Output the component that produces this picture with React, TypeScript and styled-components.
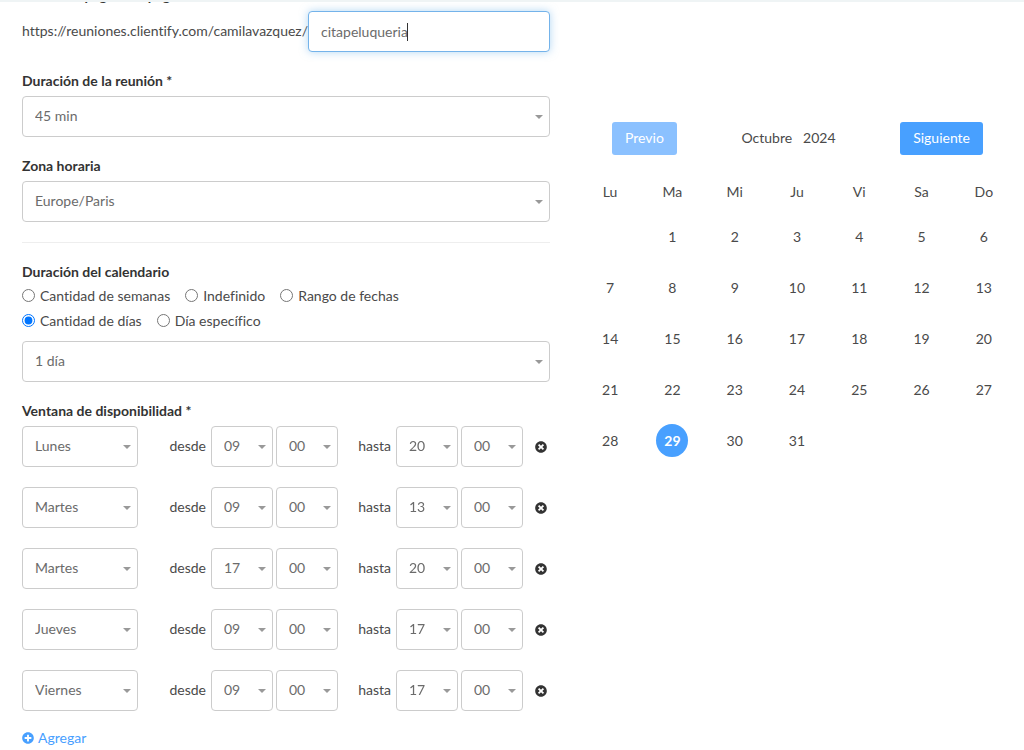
import React, { useState } from 'react';
import styled, { createGlobalStyle, css } from 'styled-components';
import { FaTimesCircle, FaPlusCircle } from 'react-icons/fa';

const GlobalStyle = createGlobalStyle`
  *, *::before, *::after { box-sizing: border-box; }
  body {
    margin: 0;
    background: #fff;
    color: #4a4a4a;
    font: 14px/20px Lato, "Open Sans", sans-serif;
    font-variant-ligatures: none;
  }
  button, input, select { font: inherit; font-variant-ligatures: none; }
`;

const Page = styled.div`
  border-top: 2px solid #eff4f5;
  overflow: hidden;
`;

const Columns = styled.main`
  display: grid;
  grid-template-columns: minmax(0, 528fr) minmax(0, 436fr);
  gap: 29px;
  padding: 0 9px 0 22px;
`;

const Form = styled.form`
  display: flex;
  flex-direction: column;
`;

const Clipped = styled.div`
  display: flex;
  align-items: flex-end;
  height: 4px;
  overflow: hidden;
  margin-bottom: 5px;
`;

const Label = styled.label`
  display: block;
  padding: 0;
  font-weight: 700;
  color: #333;
  line-height: 20px;
`;

const Field = styled.div`
  display: flex;
  flex-direction: column;
  gap: 5px;
  margin-bottom: 19px;
`;

const Group = styled.fieldset`
  border: 0;
  margin: 0;
  padding: 0;
  min-width: 0;
`;

const UrlRow = styled.div`
  display: grid;
  grid-template-columns: 286fr 242fr;
  align-items: center;
  margin-bottom: 19px;
`;

const UrlPrefix = styled.span`
  padding-bottom: 2px;
  white-space: nowrap;
`;

const UrlBox = styled.div`
  display: flex;
  align-items: center;
  position: relative;
`;

const Caret = styled.span`
  position: absolute;
  left: 99px;
  width: 1px;
  height: 18px;
  background: #333;
`;

const control = css`
  width: 100%;
  height: 41px;
  padding: 0 12px 2px;
  border: 1px solid #ccc;
  border-radius: 4px;
  background: #fff;
  color: #6b6b6b;
`;

const UrlInput = styled.input`
  ${control}
  padding-bottom: 0;
  caret-color: transparent;
  &:focus {
    outline: 0;
    border-color: #74b3ea;
    box-shadow: 0 0 8px rgba(102, 175, 233, 0.5);
  }
`;

const SelectBox = styled.div<{ $width?: number }>`
  display: flex;
  align-items: center;
  position: relative;
  width: ${(p) => (p.$width ? `${p.$width}px` : '100%')};
  &::after {
    content: '';
    position: absolute;
    right: 7px;
    border: 4px solid transparent;
    border-top-color: #999;
    border-bottom: 0;
    pointer-events: none;
  }
`;

const NativeSelect = styled.select`
  ${control}
  appearance: none;
`;

const Divider = styled.hr`
  width: 100%;
  margin: 1px 0 19px;
  border: 0;
  border-top: 1px solid #eee;
`;

const Radios = styled.div`
  display: flex;
  flex-wrap: wrap;
  column-gap: 15px;
  padding: 1px 0 8px;
`;

const RadioLabel = styled.label`
  display: flex;
  align-items: center;
  gap: 5px;
  line-height: 25px;
`;

const Radio = styled.input`
  width: 13px;
  height: 13px;
  margin: 0;
`;

const RowBreak = styled.span`
  flex-basis: 100%;
`;

const Slots = styled.div`
  display: flex;
  flex-direction: column;
  gap: 20px;
  padding: 5px 0 17px;
`;

const Slot = styled.div`
  display: grid;
  grid-template-columns: 116px 73fr auto 58fr auto 27px;
  align-items: center;
`;

const Word = styled.span`
  text-align: right;
  padding: 0 5px 2px 0;
`;

const Pair = styled.div`
  display: flex;
  gap: 3px;
`;

const IconButton = styled.button`
  display: flex;
  justify-content: flex-end;
  padding: 0 3px 0 0;
  border: 0;
  background: none;
  color: #333;
  cursor: pointer;
`;

const AddLink = styled.a`
  display: flex;
  align-items: center;
  gap: 4px;
  color: #48a0ff;
  text-decoration: none;
`;

const Calendar = styled.section`
  padding-top: 120px;
`;

const CalendarBar = styled.div`
  display: flex;
  align-items: center;
  justify-content: space-between;
  padding: 0 32px 0 33px;
  margin-bottom: 19px;
`;

const NavButton = styled.button`
  height: 33px;
  padding: 0 13px 2px;
  border: 0;
  border-radius: 3px;
  background: #48a0ff;
  color: #fff;
  &:disabled { background: #8bc1ff; }
`;

const Month = styled.div`
  display: flex;
  gap: 11px;
  padding-bottom: 2px;
`;

const Days = styled.table`
  width: 100%;
  table-layout: fixed;
  border-collapse: collapse;
  text-align: center;
  th { height: 37px; padding: 0 0 2px; font-weight: 400; }
  td { height: 51px; padding: 0; }
`;

const Day = styled.button<{ $active: boolean }>`
  width: 32px;
  height: 33px;
  padding: 0;
  border: 0;
  border-radius: 50%;
  background: ${(p) => (p.$active ? '#48a0ff' : 'transparent')};
  color: ${(p) => (p.$active ? '#fff' : 'inherit')};
  font-weight: ${(p) => (p.$active ? 700 : 400)};
`;

type SelectProps = { id?: string; label?: string; value: string; width?: number };

function Select({ id, label, value, width }: SelectProps) {
  return (
    <SelectBox $width={width}>
      <NativeSelect id={id} aria-label={label} defaultValue={value}>
        <option>{value}</option>
      </NativeSelect>
    </SelectBox>
  );
}

const slots = [
  ['Lunes', '09', '20'],
  ['Martes', '09', '13'],
  ['Martes', '17', '20'],
  ['Jueves', '09', '17'],
  ['Viernes', '09', '17'],
];

const modes = ['Cantidad de semanas', 'Indefinido', 'Rango de fechas', 'Cantidad de días', 'Día específico'];
const weekdays = ['Lu', 'Ma', 'Mi', 'Ju', 'Vi', 'Sa', 'Do'];
const weeks = [0, 1, 2, 3, 4].map((w) => weekdays.map((_, d) => w * 7 + d));

export default function App() {
  const [mode, setMode] = useState('Cantidad de días');
  const [day, setDay] = useState(29);
  return (
    <Page>
      <GlobalStyle />
      <Columns>
        <Form>
          <Clipped>
            <Label htmlFor="url">URL de la página de pago</Label>
          </Clipped>
          <UrlRow>
            <UrlPrefix>https://reuniones.clientify.com/camilavazquez/</UrlPrefix>
            <UrlBox>
              <UrlInput id="url" defaultValue="citapeluqueria" autoFocus />
              <Caret />
            </UrlBox>
          </UrlRow>
          <Field>
            <Label htmlFor="length">Duración de la reunión *</Label>
            <Select id="length" value="45 min" />
          </Field>
          <Field>
            <Label htmlFor="zone">Zona horaria</Label>
            <Select id="zone" value="Europe/Paris" />
          </Field>
          <Divider />
          <Group>
            <Label as="legend">Duración del calendario</Label>
            <Radios>
              {modes.map((m, i) => (
                <React.Fragment key={m}>
                  {i === 3 && <RowBreak />}
                  <RadioLabel>
                    <Radio type="radio" name="mode" checked={mode === m} onChange={() => setMode(m)} />
                    {m}
                  </RadioLabel>
                </React.Fragment>
              ))}
            </Radios>
          </Group>
          <Field>
            <Select label="Cantidad de días" value="1 día" />
          </Field>
          <Group>
            <Label as="legend">Ventana de disponibilidad *</Label>
            <Slots>
              {slots.map(([name, from, to], i) => (
                <Slot key={i}>
                  <Select label="Día" value={name} />
                  <Word>desde</Word>
                  <Pair>
                    <Select label="Hora de inicio" value={from} width={62} />
                    <Select label="Minuto de inicio" value="00" width={62} />
                  </Pair>
                  <Word>hasta</Word>
                  <Pair>
                    <Select label="Hora de fin" value={to} width={62} />
                    <Select label="Minuto de fin" value="00" width={62} />
                  </Pair>
                  <IconButton type="button" aria-label="Quitar">
                    <FaTimesCircle size={12} />
                  </IconButton>
                </Slot>
              ))}
            </Slots>
          </Group>
          <AddLink href="#agregar">
            <FaPlusCircle size={12} />
            Agregar
          </AddLink>
        </Form>
        <Calendar>
          <CalendarBar>
            <NavButton type="button" disabled>Previo</NavButton>
            <Month>
              <span>Octubre</span>
              <span>2024</span>
            </Month>
            <NavButton type="button">Siguiente</NavButton>
          </CalendarBar>
          <Days>
            <thead>
              <tr>{weekdays.map((d) => <th key={d} scope="col">{d}</th>)}</tr>
            </thead>
            <tbody>
              {weeks.map((week, i) => (
                <tr key={i}>
                  {week.map((n) => (
                    <td key={n}>
                      {n > 0 && n < 32 && (
                        <Day type="button" $active={n === day} onClick={() => setDay(n)}>{n}</Day>
                      )}
                    </td>
                  ))}
                </tr>
              ))}
            </tbody>
          </Days>
        </Calendar>
      </Columns>
    </Page>
  );
}
